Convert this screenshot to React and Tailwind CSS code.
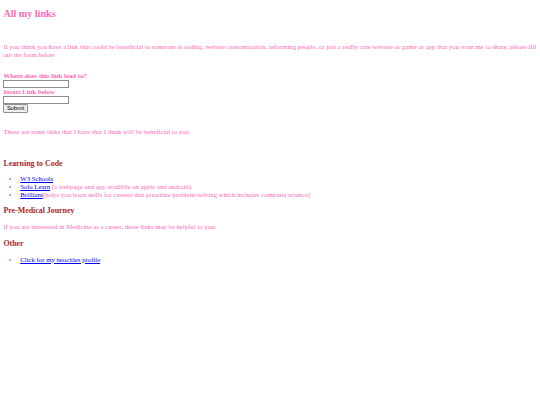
export default function App() {
  const pink = "text-[#ff69b4]";
  const brown = "text-[#a52a2a]";
  const link = "text-[#0000ee] underline";

  return (
    <div className="min-h-[405px] bg-white px-[3.4px] py-[0.1px] font-['Liberation_Serif',serif] text-[6.75px] leading-[1.15]">
      <h2 className={`my-[8.4px] text-[10.1px] font-bold ${pink}`}>All my links</h2>
      <div className="h-[7.6px]" />
      <p className={`my-[6.75px] ${pink}`}>
        If you think you have a link that could be beneficial to someone is coding, website customization, informing
        people, or just a really cute website or game or app that you want me to share, please fill out the form below
      </p>
      <div className="h-[6.8px]" />

      <form className={`flex flex-col items-start ${pink}`} onSubmit={(e) => e.preventDefault()}>
        <label className="font-bold">Where does this link lead to?</label>
        <input
          type="text"
          className="h-[8.2px] w-[66px] border border-[#8f8f8f] bg-white"
        />
        <label className="font-bold">Insert Link below</label>
        <input
          type="text"
          className="h-[8.2px] w-[66px] border border-[#8f8f8f] bg-white"
        />
        <button
          type="submit"
          className="mt-[0.6px] h-[8.8px] rounded-[1px] border border-[#8f8f8f] bg-[#efefef] px-[2.5px] font-['Liberation_Sans',sans-serif] text-[5.6px] leading-none text-black"
        >
          Submit
        </button>
      </form>
      <div className="h-[8.2px]" />

      <p className={`my-[6.75px] ${pink}`}>These are some links that I have that I think will be beneficial to you</p>
      <div className="h-[8.2px]" />

      <h3 className={`my-[7.8px] text-[7.9px] font-bold ${brown}`}>Learning to Code</h3>
      <ul className={`my-[6px] list-disc pl-[16.9px] ${pink}`}>
        <li>
          <a href="#" className={link}>W3 Schools</a>
        </li>
        <li>
          <a href="#" className={link}>Solo Learn</a> (a webpage and app availible on apple and android)
        </li>
        <li>
          <a href="#" className={link}>Brilliant</a>(helps you learn skills for careers that prioritize problem-solving
          which includes computer science)
        </li>
      </ul>

      <h3 className={`my-[7.8px] text-[7.9px] font-bold ${brown}`}>Pre-Medical Journey</h3>
      <p className={`my-[6.75px] ${pink}`}>If you are interested in Medicine as a career, these links may be helpful to you/</p>

      <h3 className={`my-[7.8px] text-[7.9px] font-bold ${brown}`}>Other</h3>
      <ul className={`my-[6px] list-disc pl-[16.9px] ${pink}`}>
        <li>
          <a href="#" className={link}>Click for my neocities profile</a>
        </li>
      </ul>
    </div>
  );
}
